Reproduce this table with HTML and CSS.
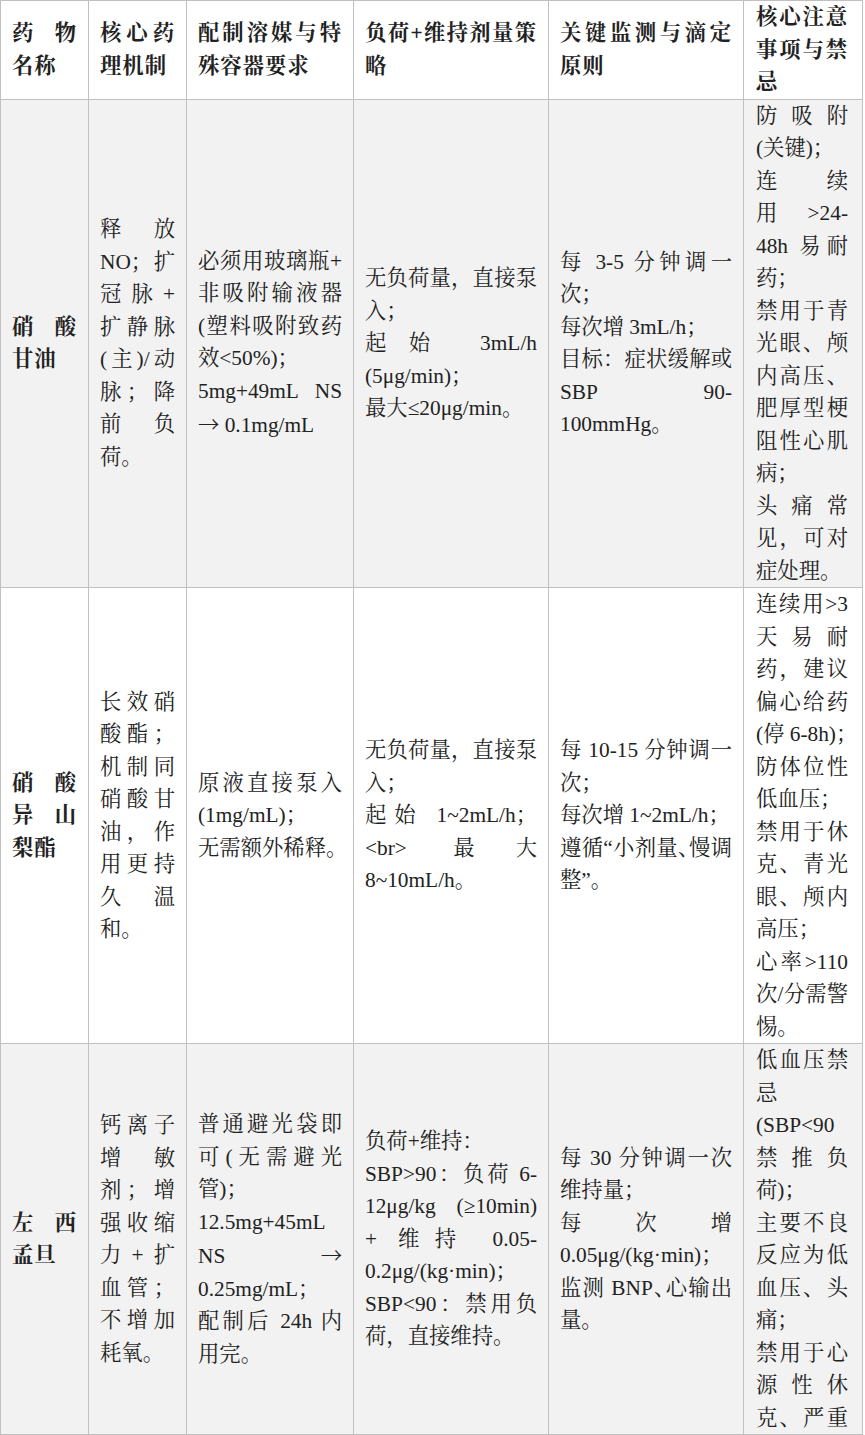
FILE: index.html
```html
<!DOCTYPE html>
<html lang="zh-CN">
<head>
<meta charset="utf-8">
<title>药物表</title>
<link rel="stylesheet" href="styles.css">
</head>
<body>
<table class="grid">
  <colgroup>
    <col class="c1"><col class="c2"><col class="c3"><col class="c4"><col class="c5"><col class="c6">
  </colgroup>
  <thead>
    <tr>
      <th>药物名称</th>
      <th>核心药理机制</th>
      <th>配制溶媒与特殊容器要求</th>
      <th>负荷+维持剂量策略</th>
      <th>关键监测与滴定原则</th>
      <th class="last">核心注意事项与禁忌</th>
    </tr>
  </thead>
  <tbody>
    <tr class="alt">
      <td class="name">硝酸甘油</td>
      <td>释放NO；扩冠脉+<wbr>扩静脉(主)/动脉；降前负荷。</td>
      <td>必须用玻璃瓶+<wbr>非吸附输液器(塑料吸附致药效&lt;50%)；<br>5mg+49mL NS <span class="ar">→</span> 0.1mg/mL</td>
      <td>无负荷量，直接泵入；<br>起始 3mL/h <span class="nw">(5μg/min)；</span><br>最大≤20μg/min。</td>
      <td>每 3-5 分钟调一次；<br>每次增 3mL/h；<br>目标：症状缓解或 SBP 90-<wbr>100mmHg。</td>
      <td class="last">防吸附<span class="nw">(关键)；</span><br>连续用&#8288;&gt;24-<wbr>48h 易耐药；<br>禁用于青光眼、颅内高压、肥厚型梗阻性心肌病；<br>头痛常见，可对症处理。</td>
    </tr>
    <tr>
      <td class="name">硝酸异山梨酯</td>
      <td>长效硝酸酯；机制同硝酸甘油，作用更持久温和。</td>
      <td>原液直接泵入(1mg/mL)；<br><span class="nw">无需额外稀释。</span></td>
      <td>无负荷量，直接泵入；<br>起始 1~2mL/h；&lt;br&gt; 最大8~10mL/h。</td>
      <td>每 10-15 分钟调一次；<br>每次增 1~2mL/h；<br>遵循“小剂量<span class="pn">、</span>慢调整”。</td>
      <td class="last">连续用&gt;3天易耐药，建议偏心给药<span class="nw">(停 6-8h)；</span><br>防体位性低血压；<br>禁用于休克、青光眼、颅内高压；<br>心率&gt;110次/分需警惕。</td>
    </tr>
    <tr class="alt">
      <td class="name">左西孟旦</td>
      <td>钙离子增敏剂；增强收缩力+扩血管；不增加耗氧。</td>
      <td>普通避光袋即可(无需避光管)；<br>12.5mg+45mL NS <span class="ar">→</span> <span class="nw">0.25mg/mL；</span><br>配制后 24h 内用完。</td>
      <td>负荷+维持：<br>SBP&gt;90：负荷 6-<wbr>12μg/kg (≥10min) + 维持 0.05-<wbr><span class="nw">0.2μg/(kg·min)；</span><br>SBP&lt;90：禁用负荷，直接维持。</td>
      <td>每 30 分钟调一次维持量；<br>每次增 <span class="nw">0.05μg/(kg·min)；</span><br>监测 BNP<span class="pn">、</span>心输出量。</td>
      <td class="last"><div>低血压禁忌(SBP&lt;90禁推负荷)；<br>主要不良反应为低血压、头痛；</div><div class="tail">禁用于心源性休克、严重</div></td>
    </tr>
  </tbody>
</table>
</body>
</html>
```

FILE: styles.css
```css
body {
  margin: 0;
  background: #ffffff;
  color: #222222;
  font-family: "Liberation Serif", "Noto Serif CJK SC", "Noto Sans CJK SC", serif;
  font-size: 21.33px;
  line-height: 32.5px;
}

.grid {
  border-collapse: collapse;
  table-layout: fixed;
  width: 862px;
}

.c1 { width: 88px; }
.c2 { width: 98px; }
.c3 { width: 167px; }
.c4 { width: 195px; }
.c5 { width: 195px; }
.c6 { width: 119px; }

.grid th,
.grid td {
  border: 1px solid #c0c0c0;
  padding: 0 11px;
  vertical-align: middle;
  text-align: justify;
  font-weight: normal;
  background: #ffffff;
}

.grid th,
.grid .name {
  font-weight: bold;
  letter-spacing: 1px;
}

.grid .last {
  padding: 0 14px 0 12px;
}

.grid .alt td {
  background: #f2f2f2;
}

.nw {
  white-space: nowrap;
}

.pn {
  font-feature-settings: "halt";
}

.ar {
  font-family: "Noto Sans CJK SC", "Liberation Serif", sans-serif;
  font-weight: 300;
}

.tail {
  text-align-last: justify;
}
```
